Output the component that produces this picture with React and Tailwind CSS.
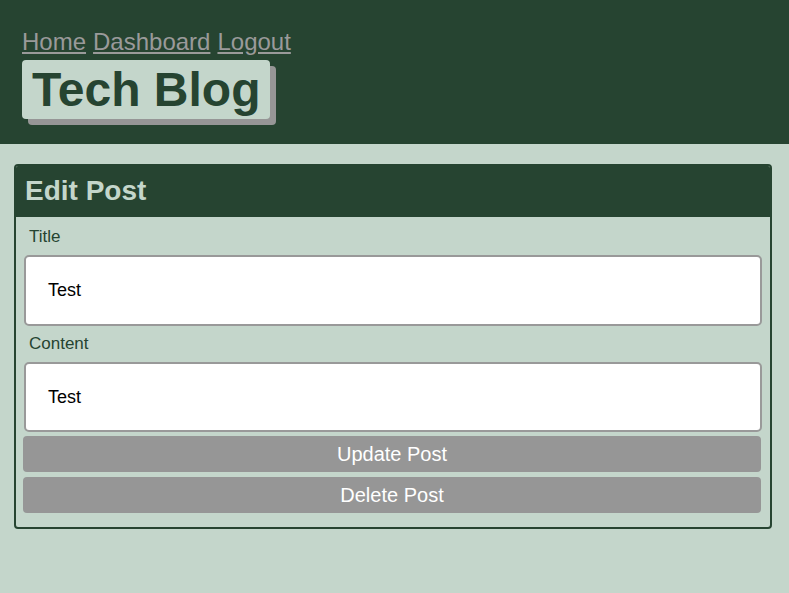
export default function App() {
    return (
        <div className="min-h-[593px] bg-[#c4d6cb] font-['Liberation_Sans',Arial,sans-serif]">
            <header className="h-[144px] bg-[#264431] px-[22px] pt-[28px]">
                <nav className="flex gap-[7px] text-[24px] leading-[28px] text-[#9a9a9a]">
                    <a href="#" className="underline">Home</a>
                    <a href="#" className="underline">Dashboard</a>
                    <a href="#" className="underline">Logout</a>
                </nav>
                <h1 className="mt-[4px] inline-block rounded-[4px] bg-[#c4d6cb] px-[10px] py-[2px] text-[48px] font-bold leading-[55px] text-[#264431] shadow-[6px_6px_0_#969696]">
                    Tech Blog
                </h1>
            </header>
            <main className="pl-[14px] pr-[17px] pt-[20px]">
                <EditPost />
            </main>
        </div>
    );
}

function EditPost() {
    return (
        <section className="overflow-hidden rounded-[4px] border-2 border-[#264431]">
            <h2 className="bg-[#264431] px-[9px] pb-[10px] pt-[9px] text-[28px] font-bold leading-[32px] text-[#c4d6cb]">
                Edit Post
            </h2>
            <form className="flex flex-col px-[8px] pb-[14px] pt-[10px]">
                <label className="pl-[5px] text-[17px] leading-[20px] text-[#264431]">Title</label>
                <div className="mt-[8px] flex h-[71px] items-center rounded-[5px] border-2 border-[#999999] bg-white pl-[22px] text-[18px] text-black">
                    Test
                </div>
                <label className="mt-[8px] pl-[5px] text-[17px] leading-[20px] text-[#264431]">Content</label>
                <div className="mt-[8px] flex h-[70px] items-center rounded-[5px] border-2 border-[#999999] bg-white pl-[22px] text-[18px] text-black">
                    Test
                </div>
                <button type="button" className="-ml-px mr-px mt-[4px] h-[36px] rounded-[4px] bg-[#969696] text-[20px] text-white">
                    Update Post
                </button>
                <button type="button" className="-ml-px mr-px mt-[5px] h-[36px] rounded-[4px] bg-[#969696] text-[20px] text-white">
                    Delete Post
                </button>
            </form>
        </section>
    );
}
